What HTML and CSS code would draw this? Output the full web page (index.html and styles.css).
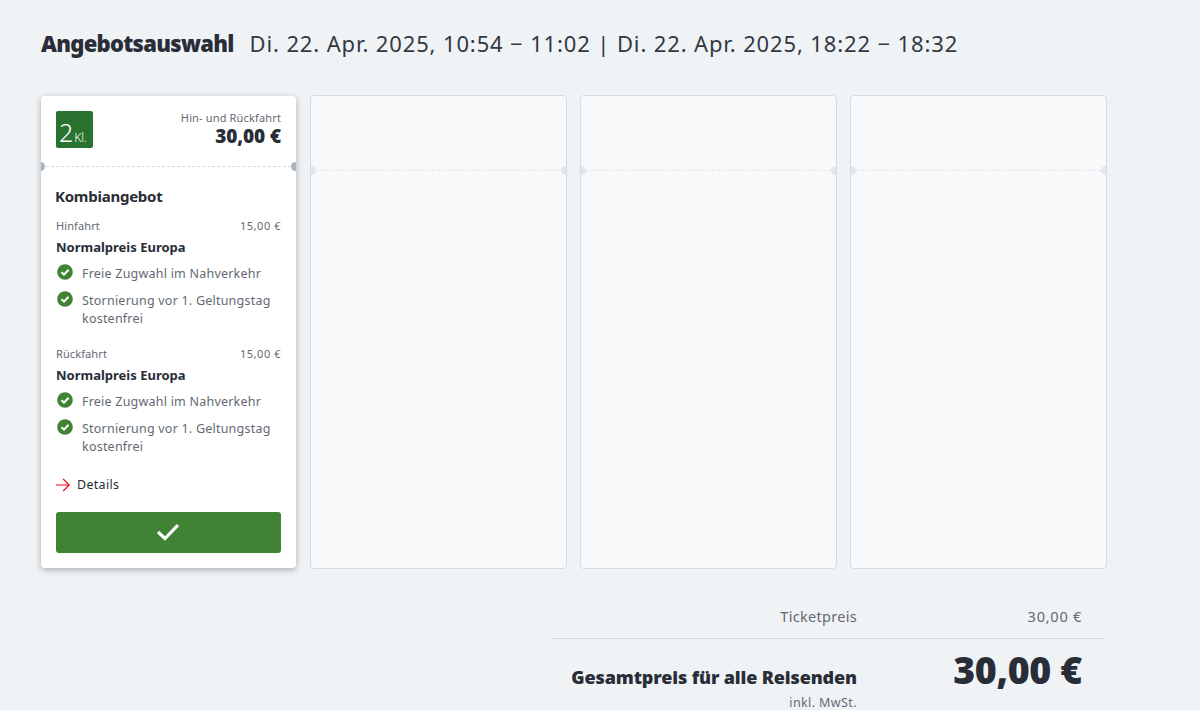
FILE: index.html
```html
<!DOCTYPE html>
<html lang="de">
<head>
<meta charset="utf-8">
<title>Angebotsauswahl</title>
<link rel="stylesheet" href="styles.css">
</head>
<body>
<main class="page">
  <header class="heading">
    <h1 class="title">Angebotsauswahl</h1>
    <p class="trip">Di. 22. Apr. 2025, 10:54 − 11:02 | Di. 22. Apr. 2025, 18:22 − 18:32</p>
  </header>
  <section class="offers">
    <article class="card card-selected">
      <div class="card-top">
        <div class="class-badge"><span class="class-num">2</span><span class="class-label">Kl.</span></div>
        <div class="top-price">
          <div class="direction">Hin- und Rückfahrt</div>
          <div class="price">30,00 €</div>
        </div>
      </div>
      <div class="divider"><span class="notch notch-l"></span><span class="notch notch-r"></span></div>
      <div class="card-body">
        <h2 class="offer-name">Kombiangebot</h2>
        <div class="leg">
          <div class="leg-row"><span>Hinfahrt</span><span class="leg-price">15,00 €</span></div>
          <div class="fare">Normalpreis Europa</div>
          <ul class="features">
            <li class="feature"><svg class="check" viewBox="0 0 16 16"><circle cx="8" cy="8" r="7.8" fill="#408335"/><path d="M4.4 8.2l2.6 2.4 4.6-4.8" fill="none" stroke="#fff" stroke-width="2"/></svg><span>Freie Zugwahl im Nahverkehr</span></li>
            <li class="feature"><svg class="check" viewBox="0 0 16 16"><circle cx="8" cy="8" r="7.8" fill="#408335"/><path d="M4.4 8.2l2.6 2.4 4.6-4.8" fill="none" stroke="#fff" stroke-width="2"/></svg><span>Stornierung vor 1. Geltungstag kostenfrei</span></li>
          </ul>
        </div>
        <div class="leg">
          <div class="leg-row"><span>Rückfahrt</span><span class="leg-price">15,00 €</span></div>
          <div class="fare">Normalpreis Europa</div>
          <ul class="features">
            <li class="feature"><svg class="check" viewBox="0 0 16 16"><circle cx="8" cy="8" r="7.8" fill="#408335"/><path d="M4.4 8.2l2.6 2.4 4.6-4.8" fill="none" stroke="#fff" stroke-width="2"/></svg><span>Freie Zugwahl im Nahverkehr</span></li>
            <li class="feature"><svg class="check" viewBox="0 0 16 16"><circle cx="8" cy="8" r="7.8" fill="#408335"/><path d="M4.4 8.2l2.6 2.4 4.6-4.8" fill="none" stroke="#fff" stroke-width="2"/></svg><span>Stornierung vor 1. Geltungstag kostenfrei</span></li>
          </ul>
        </div>
        <a class="details" href="#"><svg class="arrow" viewBox="0 0 14 14"><path d="M0 7h13M7.2 1l6 6-6 6" fill="none" stroke="#ec0016" stroke-width="1.1"/></svg><span>Details</span></a>
        <button class="select" type="button"><svg class="select-icon" viewBox="0 0 24 20"><path d="M1 9l7 6.5L21 2" fill="none" stroke="#fff" stroke-width="3.2"/></svg></button>
      </div>
    </article>
    <article class="card card-empty"><div class="divider divider-empty"><span class="notch notch-l"></span><span class="notch notch-r"></span></div></article>
    <article class="card card-empty"><div class="divider divider-empty"><span class="notch notch-l"></span><span class="notch notch-r"></span></div></article>
    <article class="card card-empty"><div class="divider divider-empty"><span class="notch notch-l"></span><span class="notch notch-r"></span></div></article>
  </section>
  <section class="totals">
    <div class="total-row ticket-row"><span class="total-label">Ticketpreis</span><span class="total-value">30,00 €</span></div>
    <div class="total-row sum-row"><span class="total-label sum-label">Gesamtpreis für alle Reisenden</span><span class="total-value sum-value">30,00 €</span></div>
    <div class="tax">inkl. MwSt.</div>
  </section>
</main>
</body>
</html>
```
FILE: styles.css
```css
* { box-sizing: border-box; }
html, body { height: 100%; }
body {
  margin: 0;
  background: #f0f3f5;
  color: #282d37;
  font-family: "Noto Sans", "Open Sans", "Liberation Sans", sans-serif;
  overflow: hidden;
}
.page { padding: 28px 0 0 40px; width: 1200px; }
.heading { display: flex; align-items: baseline; gap: 16px; height: 30px; padding-left: 1px; }
.title { margin: 0; font-size: 22px; font-weight: 900; line-height: 30px; letter-spacing: -0.73px; white-space: nowrap; }
.trip { margin: 0; font-size: 22px; font-weight: 400; line-height: 30px; letter-spacing: 0.87px; color: #333842; white-space: nowrap; }
.offers { display: grid; grid-template-columns: repeat(4, 257px); column-gap: 13px; margin-top: 37px; height: 474px; }
.card { border-radius: 4px; position: relative; }
.card-empty { background: #f8f9fb; border: 1px solid #d7dce1; padding-top: 74px; }
.card-selected { margin: 1px; background: #fff; box-shadow: 0 2px 6px rgba(40, 45, 55, 0.35); display: flex; flex-direction: column; }
.card-top { display: flex; justify-content: space-between; padding: 15px 15px 0; height: 70px; }
.class-badge { width: 37px; height: 37px; background: #2a7230; border-radius: 2px; color: #fff; display: flex; align-items: baseline; justify-content: center; padding: 7px 3px 0 0; font-weight: 300; }
.class-num { font-size: 25px; line-height: 28px; }
.class-label { font-size: 12px; margin-left: 1px; }
.top-price { text-align: right; }
.direction { font-size: 11px; line-height: 14px; color: #646973; letter-spacing: 0.15px; }
.price { font-size: 19px; line-height: 22px; font-weight: 900; letter-spacing: -0.1px; }
.divider { height: 1px; border-top: 1px dashed #d7dce1; position: relative; }
.notch { position: absolute; top: -5px; width: 9px; height: 9px; border-radius: 50%; background: #afb4bb; }
.notch-l { left: -5px; clip-path: inset(0 0 0 5px); }
.notch-r { right: -4px; clip-path: inset(0 4px 0 0); }
.divider-empty { border-top-color: #e3e6ea; }
.divider-empty .notch { background: #e3e6ea; }
.divider-empty .notch-l { left: -4px; clip-path: inset(0 0 0 4px); }
.card-body { padding: 19px 15px 0; }
.offer-name { margin: 0 0 12px -1px; font-size: 15px; line-height: 20px; font-weight: 700; letter-spacing: -0.25px; }
.leg { margin-bottom: 18px; }
.leg-row { display: flex; justify-content: space-between; font-size: 11px; line-height: 16px; color: #646973; letter-spacing: 0.1px; }
.leg-price { letter-spacing: 0.55px; }
.fare { font-size: 13px; line-height: 18px; font-weight: 700; margin-top: 4px; }
.features { list-style: none; margin: 9px 0 0; padding: 0; }
.feature { display: flex; gap: 9px; font-size: 12.5px; line-height: 18px; letter-spacing: 0.22px; color: #646973; margin-bottom: 9px; padding-left: 1px; }
.feature:last-child { margin-bottom: 0; }
.check { width: 16px; height: 16px; flex: none; margin-top: -1px; }
.details { display: flex; align-items: center; gap: 7px; font-size: 12.5px; line-height: 18px; letter-spacing: 0.3px; color: #282d37; text-decoration: none; margin-top: 20px; }
.arrow { width: 14px; height: 14px; }
.select { display: flex; align-items: center; justify-content: center; width: 225px; height: 41px; margin-top: 18px; padding: 0; border: 0; border-radius: 3px; background: #408335; }
.select-icon { width: 24px; height: 20px; }
.totals { width: 554px; margin: 31px 0 0 511px; }
.total-row { display: flex; align-items: baseline; justify-content: flex-end; }
.total-label { width: 306px; text-align: right; }
.total-value { width: 225px; text-align: right; margin-right: 23px; }
.ticket-row { height: 39px; padding-top: 6px; border-bottom: 1px solid #d7dce1; font-size: 14.5px; line-height: 20px; letter-spacing: 0.3px; color: #646973; }
.ticket-row .total-value { letter-spacing: 0.75px; }
.sum-row { padding-top: 9px; height: 56px; }
.sum-label { font-size: 18px; font-weight: 900; line-height: 40px; white-space: nowrap; letter-spacing: -0.13px; }
.sum-value { font-size: 37.5px; font-weight: 900; line-height: 44px; letter-spacing: -0.35px; }
.tax { width: 306px; font-size: 12.5px; line-height: 16px; letter-spacing: 0.4px; color: #646973; text-align: right; }
```
